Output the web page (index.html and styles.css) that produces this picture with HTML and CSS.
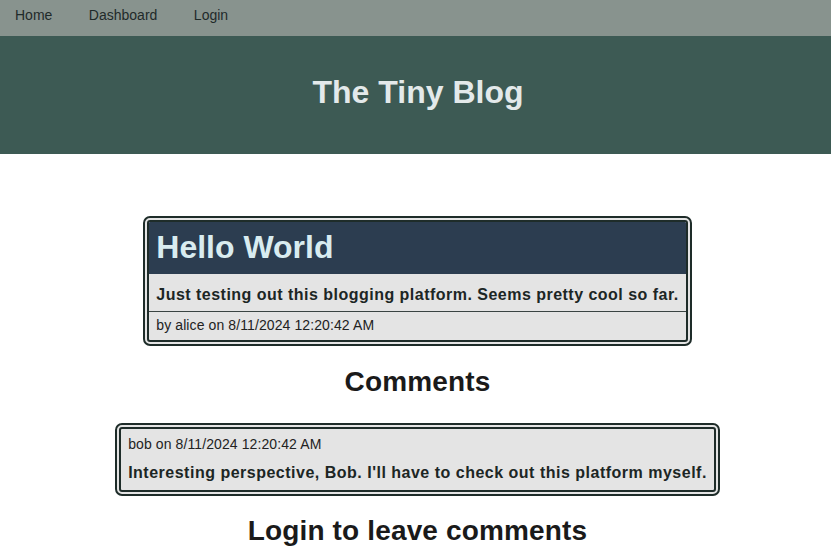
FILE: index.html
```html
<!DOCTYPE html>
<html>
<head>
<meta charset="utf-8">
<title>The Tiny Blog</title>
<link rel="stylesheet" href="styles.css">
</head>
<body>
<nav class="nav">
  <a class="nav-link" href="#">Home</a>
  <a class="nav-link" href="#">Dashboard</a>
  <a class="nav-link" href="#">Login</a>
</nav>
<header class="hero">
  <h1 class="hero-title">The Tiny Blog</h1>
</header>
<main class="main">
  <article class="post">
    <div class="post-head"><h2 class="post-title">Hello World</h2></div>
    <p class="post-body">Just testing out this blogging platform. Seems pretty cool so far.</p>
    <div class="post-meta">by alice on 8/11/2024 12:20:42 AM</div>
  </article>
  <h2 class="section-title">Comments</h2>
  <div class="comment">
    <div class="comment-meta">bob on 8/11/2024 12:20:42 AM</div>
    <p class="comment-body">Interesting perspective, Bob. I'll have to check out this platform myself.</p>
  </div>
  <h2 class="section-title login-title">Login to leave comments</h2>
</main>
</body>
</html>
```
FILE: styles.css
```css
html, body {
  margin: 0;
  padding: 0;
  background: #ffffff;
  font-family: "Liberation Sans", Arial, sans-serif;
  color: #1c2624;
}
.nav {
  display: flex;
  gap: 36.5px;
  height: 36px;
  padding: 0 15px;
  box-sizing: border-box;
  background: #88938e;
  align-items: flex-start;
}
.nav-link {
  font-size: 14px;
  line-height: 18px;
  padding-top: 6px;
  color: #1f2a2a;
  text-decoration: none;
}
.hero {
  height: 118px;
  box-sizing: border-box;
  padding: 0 0 6px 5px;
  background: #3d5a54;
  display: flex;
  align-items: center;
  justify-content: center;
}
.hero-title {
  margin: 0;
  font-size: 32px;
  font-weight: bold;
  color: #e3e9ea;
  line-height: 37px;
}
.main {
  display: flex;
  flex-direction: column;
  align-items: center;
  padding: 62px 0 0 4px;
}
.post {
  border: 6px double #1e2c29;
  border-radius: 7px;
  background: #e4e4e4;
  overflow: hidden;
}
.post-head {
  background: #2c3d50;
  padding: 7px 7px 8px;
}
.post-title {
  margin: 0;
  font-size: 32px;
  line-height: 37px;
  color: #d9ecf0;
}
.post-body {
  margin: 0;
  padding: 12px 7px 7px;
  font-size: 16px;
  line-height: 18px;
  font-weight: bold;
  letter-spacing: 0.48px;
  color: #1c2624;
  border-bottom: 1px solid #3a4442;
}
.post-meta {
  padding: 5px 7px 7px;
  font-size: 14px;
  line-height: 16px;
  letter-spacing: 0.1px;
  color: #222;
}
.section-title {
  margin: 20px 0 0;
  font-size: 28px;
  line-height: 32px;
  font-weight: bold;
  letter-spacing: 0.15px;
  color: #1a1a1a;
}
.comment {
  margin-top: 25px;
  border: 6px double #1e2c29;
  border-radius: 7px;
  background: #e4e4e4;
  padding: 7px 7px 8px;
}
.comment-meta {
  font-size: 14px;
  line-height: 16px;
  letter-spacing: 0.1px;
  color: #222;
}
.comment-body {
  margin: 12px 0 0;
  font-size: 16px;
  line-height: 18px;
  font-weight: bold;
  letter-spacing: 0.5px;
  color: #1c2624;
}
.login-title {
  margin-top: 19px;
}
```
